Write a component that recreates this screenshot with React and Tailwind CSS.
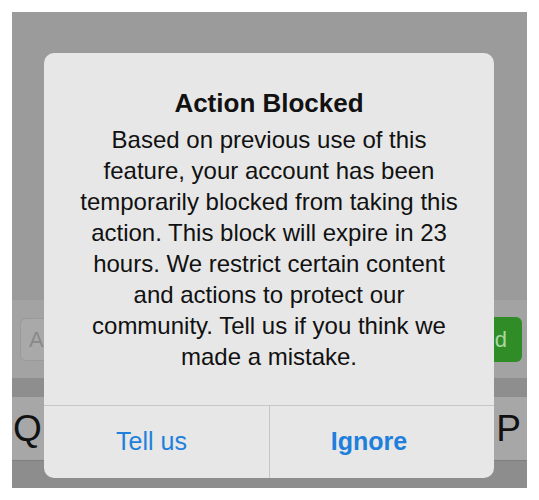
const bodyLines = [
  "Based on previous use of this",
  "feature, your account has been",
  "temporarily blocked from taking this",
  "action. This block will expire in 23",
  "hours. We restrict certain content",
  "and actions to protect our",
  "community. Tell us if you think we",
  "made a mistake.",
];

export default function App() {
  return (
    <div className="bg-white p-[12px] font-['Liberation_Sans',Arial,sans-serif]">
      <div className="relative flex flex-col w-[515px] h-[476px] overflow-hidden">
        {/* Screen behind the alert */}
        <div className="flex-1 bg-[#9b9b9b]" />

        {/* Comment bar */}
        <div className="h-[78px] bg-[#a3a3a3] flex items-center pl-[8px] pr-[5px] gap-[6px]">
          <div className="flex-1 h-[43px] rounded-[6px] border border-[#9a9a9a] bg-[#a9a9a9] flex items-center pl-[8px] text-[22px] text-[#8a8a8a]">
            A
          </div>
          <div className="w-[67px] h-[45px] rounded-[6px] bg-[#2f8c27] flex items-center justify-end pr-[15px] text-[22px] text-[#a8d8a0]">
            Send
          </div>
        </div>

        <div className="h-[19px] bg-[#8e8e8e]" />

        {/* Keyboard row */}
        <div className="h-[63px] bg-[#a7a7a7] flex items-center justify-between pl-[1px] pr-[6px] text-[37px] text-[#111]">
          <span>Q</span>
          <span>P</span>
        </div>

        <div className="h-[28px] bg-[#8d8d8d] border-t border-[#7f7f7f]" />

        {/* Alert */}
        <div className="absolute left-[32px] top-[41px] w-[450px] h-[425px] rounded-[10px] bg-[#e7e7e7] flex flex-col text-[#111]">
          <div className="flex-1 flex flex-col items-center pt-[34px] text-center">
            <div className="text-[26px] leading-[32px] font-bold">Action Blocked</div>
            <div className="mt-[5px] text-[24px] leading-[31px]">
              {bodyLines.map((line) => (
                <div key={line}>{line}</div>
              ))}
            </div>
          </div>
          <div className="h-[73px] grid grid-cols-2 border-t border-[#c6c6c6]">
            <div className="flex items-center justify-center pr-[10px] text-[25px] text-[#1f7fdc]">
              Tell us
            </div>
            <div className="flex items-center justify-center pr-[26px] border-l border-[#c6c6c6] text-[25px] font-bold text-[#1f7fdc]">
              Ignore
            </div>
          </div>
        </div>
      </div>
    </div>
  );
}
